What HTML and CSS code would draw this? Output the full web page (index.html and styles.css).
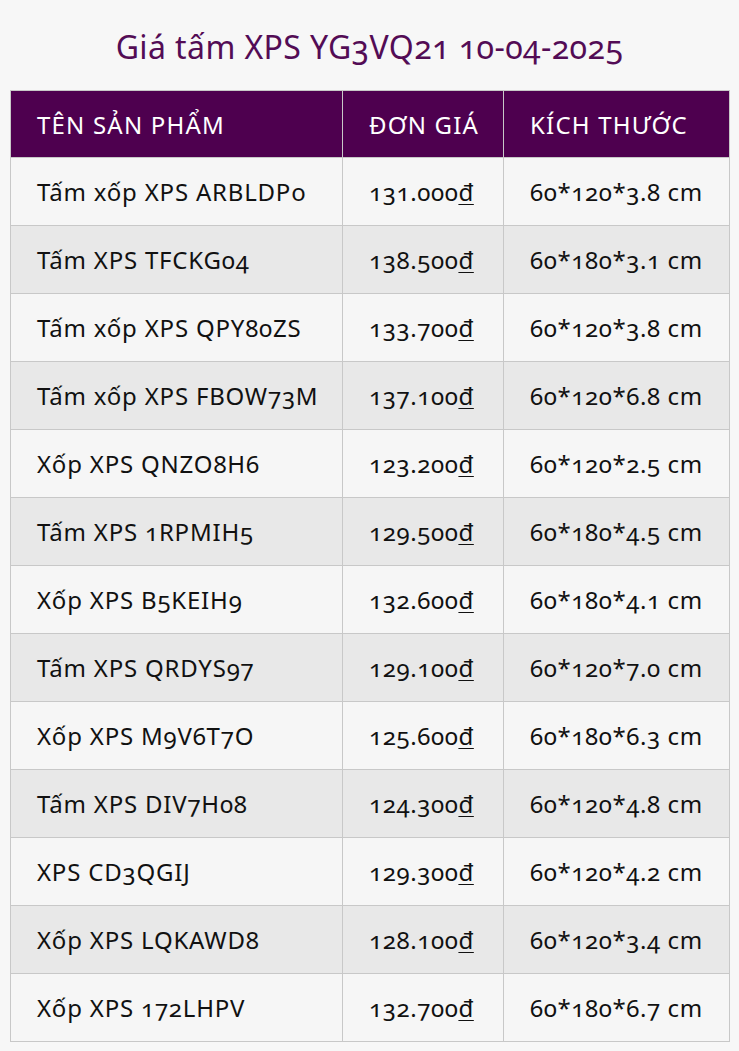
FILE: index.html
```html
<!DOCTYPE html>
<html lang="vi">
<head>
<meta charset="utf-8">
<title>Giá tấm XPS</title>
<link rel="stylesheet" href="styles.css">
</head>
<body>
<div class="page">
  <h1 class="title">Giá tấm XPS YG3VQ21 10-04-2025</h1>
  <table class="price-table">
    <colgroup>
      <col class="c-name">
      <col class="c-price">
      <col class="c-size">
    </colgroup>
    <thead>
      <tr><th>TÊN SẢN PHẨM</th><th>ĐƠN GIÁ</th><th>KÍCH THƯỚC</th></tr>
    </thead>
    <tbody>
      <tr><td>Tấm xốp XPS ARBLDPo</td><td>131.000<u>đ</u></td><td>60*120*3.8 cm</td></tr>
      <tr><td>Tấm XPS TFCKG04</td><td>138.500<u>đ</u></td><td>60*180*3.1 cm</td></tr>
      <tr><td>Tấm xốp XPS QPY80ZS</td><td>133.700<u>đ</u></td><td>60*120*3.8 cm</td></tr>
      <tr><td>Tấm xốp XPS FBOW73M</td><td>137.100<u>đ</u></td><td>60*120*6.8 cm</td></tr>
      <tr><td>Xốp XPS QNZO8H6</td><td>123.200<u>đ</u></td><td>60*120*2.5 cm</td></tr>
      <tr><td>Tấm XPS 1RPMIH5</td><td>129.500<u>đ</u></td><td>60*180*4.5 cm</td></tr>
      <tr><td>Xốp XPS B5KEIH9</td><td>132.600<u>đ</u></td><td>60*180*4.1 cm</td></tr>
      <tr><td>Tấm XPS QRDYS97</td><td>129.100<u>đ</u></td><td>60*120*7.0 cm</td></tr>
      <tr><td>Xốp XPS M9V6T7O</td><td>125.600<u>đ</u></td><td>60*180*6.3 cm</td></tr>
      <tr><td>Tấm XPS DIV7H08</td><td>124.300<u>đ</u></td><td>60*120*4.8 cm</td></tr>
      <tr><td>XPS CD3QGIJ</td><td>129.300<u>đ</u></td><td>60*120*4.2 cm</td></tr>
      <tr><td>Xốp XPS LQKAWD8</td><td>128.100<u>đ</u></td><td>60*120*3.4 cm</td></tr>
      <tr><td>Xốp XPS 172LHPV</td><td>132.700<u>đ</u></td><td>60*180*6.7 cm</td></tr>
    </tbody>
  </table>
</div>
</body>
</html>
```

FILE: styles.css
```css
html, body {
  margin: 0;
  padding: 0;
  background: #f7f7f7;
}
.page {
  padding: 0 10px;
  font-family: "Noto Sans", "Open Sans", sans-serif;
  font-variant-numeric: oldstyle-nums;
}
.title {
  margin: 0;
  padding: 29px 0 25px;
  font-size: 32px;
  line-height: 36px;
  font-weight: 400;
  text-align: center;
  color: #530c55;
  letter-spacing: 0.4px;
}
.price-table {
  width: 719px;
  border-collapse: collapse;
  table-layout: fixed;
}
.c-name { width: 332px; }
.c-price { width: 161px; }
.c-size { width: 226px; }
.price-table th,
.price-table td {
  padding: 0 0 0 26px;
  border: 1px solid #c8c8c8;
  text-align: left;
  font-size: 24px;
  font-weight: 400;
  white-space: nowrap;
  box-sizing: border-box;
}
.price-table th {
  height: 67px;
  background: #4e004f;
  color: #ffffff;
  letter-spacing: 1.2px;
}
.price-table td {
  height: 68px;
  color: #111111;
  letter-spacing: 0.8px;
}
.price-table td + td { letter-spacing: 0.6px; }
.price-table tbody tr:nth-child(odd) td { background: #f6f6f6; }
.price-table tbody tr:nth-child(even) td { background: #e8e8e8; }
.price-table u {
  text-decoration-thickness: 1px;
  text-underline-offset: 3px;
}
```
